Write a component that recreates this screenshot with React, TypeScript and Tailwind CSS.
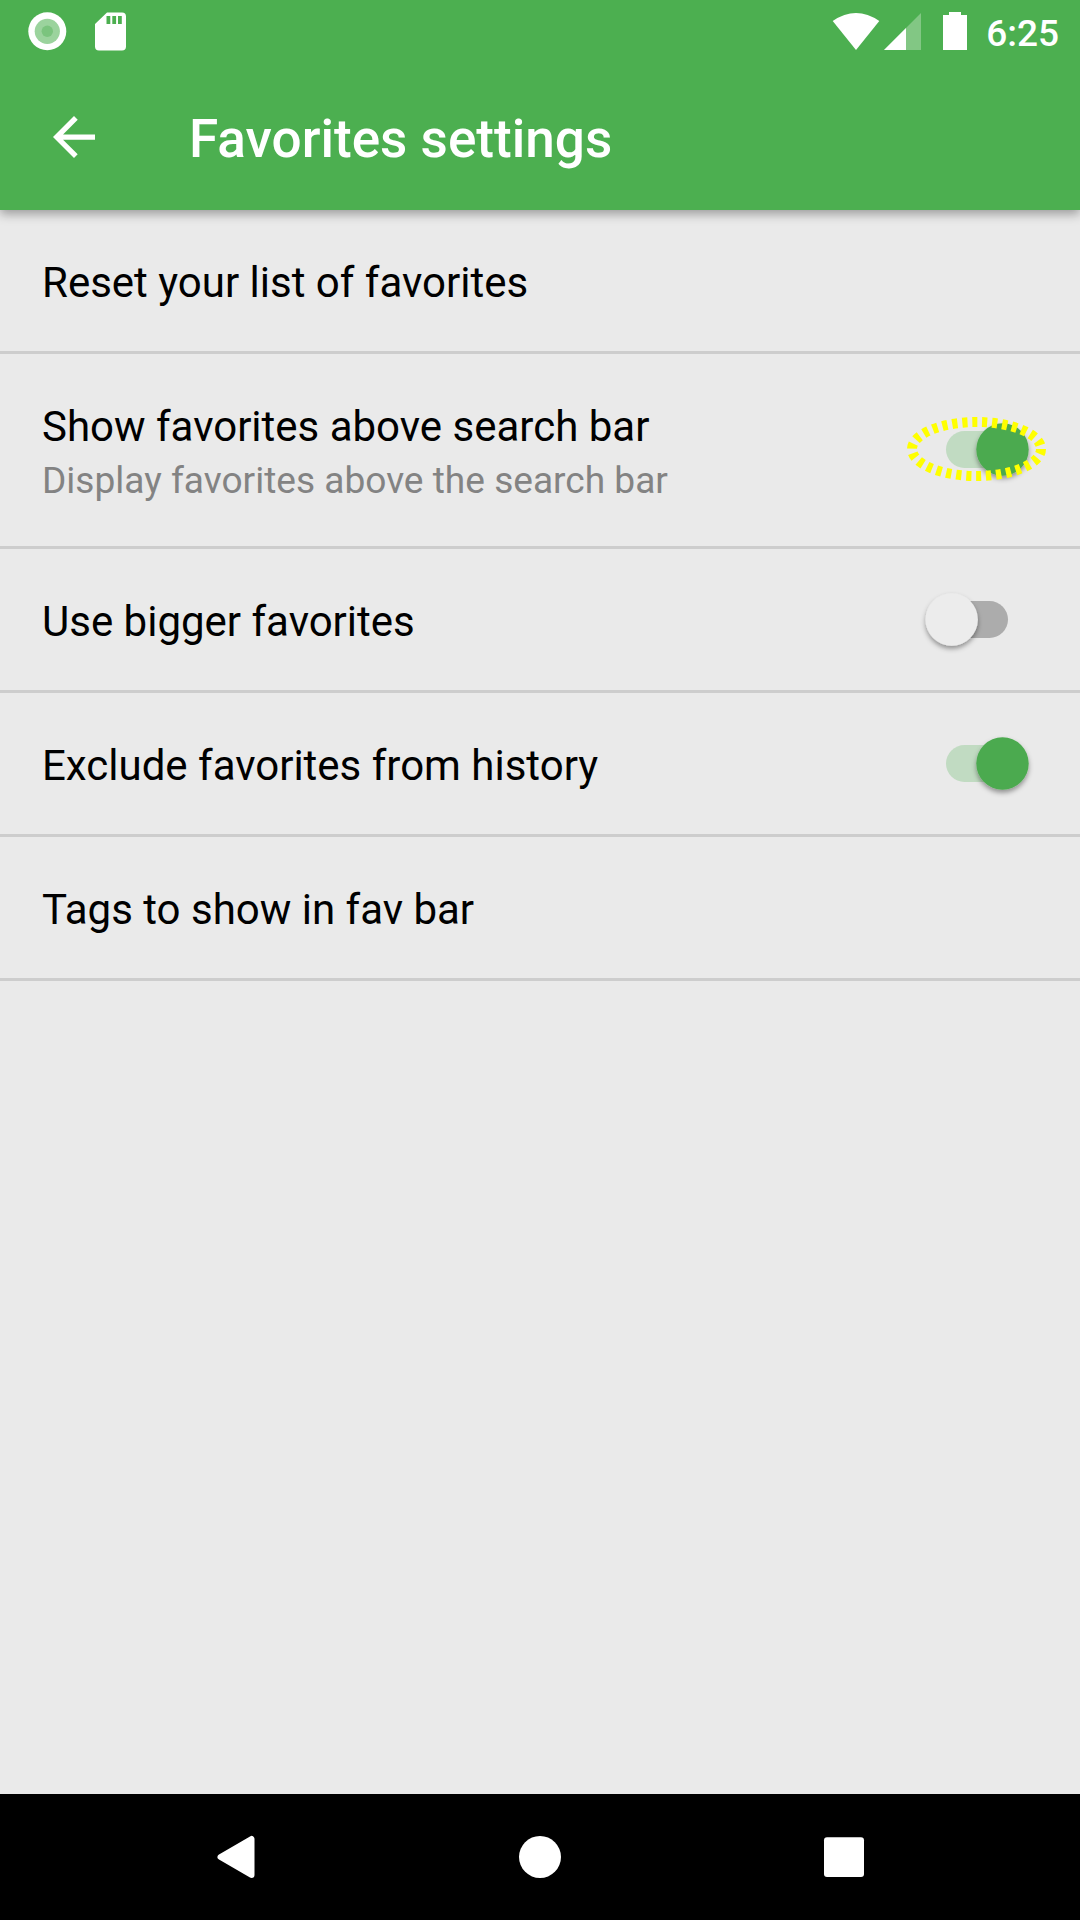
import React from "react";

function Toggle({ on, marked }: { on?: boolean; marked?: boolean }) {
  return (
    <svg className="h-[81px] w-[144px] shrink-0 overflow-visible" viewBox="0 0 144 81" fill="none">
      <defs>
        <filter id="knob-shadow" x="-30%" y="-30%" width="160%" height="170%">
          <feDropShadow dx="0" dy="3" stdDeviation="2.4" floodColor="#000" floodOpacity=".38" />
        </filter>
      </defs>
      {on ? (
        <rect x="42" y="22" width="72" height="37" rx="18.5" fill="#c1dbc2" />
      ) : (
        <rect x="32" y="22" width="72" height="37" rx="18.5" fill="#acacac" />
      )}
      <circle cx={on ? 98.5 : 47.7} cy="40.5" r="26.2" fill={on ? "#4caa4f" : "#ececec"} filter="url(#knob-shadow)" />
      {marked && <ellipse cx="72.5" cy="40" rx="64.5" ry="27" stroke="#ffff00" strokeWidth="10" strokeDasharray="5.2 4.8" />}
    </svg>
  );
}

function Row({ title, subtitle, children }: { title: string; subtitle?: string; children?: React.ReactNode }) {
  return (
    <div className={`flex items-center justify-between border-b-[3px] border-[#cdcdcd] pl-[42px] pr-[32px] ${subtitle ? "h-[195px] pb-px" : "h-[144px]"}`}>
      <div className={subtitle ? "pt-[12px]" : "pt-[5px]"}>
        <div className="text-[42px] leading-[50px] text-black">{title}</div>
        {subtitle && <div className="text-[37.1px] leading-[57px] text-[#838383]">{subtitle}</div>}
      </div>
      {children}
    </div>
  );
}

export default function App() {
  return (
    <div className="flex h-[1920px] w-[1080px] flex-col bg-[#eaeaea] font-['Roboto',sans-serif]">
      <header className="h-[210px] bg-[#4caf50] text-white shadow-[0_4px_10px_rgba(0,0,0,0.34)]">
        <div className="flex h-[64px] items-center justify-between pl-[28px] pr-[21px]">
          <svg className="h-[64px] w-[100px]" viewBox="28 0 100 64">
            <circle cx="47.3" cy="31.3" r="19" fill="white" />
            <circle cx="47.3" cy="31.3" r="12.6" fill="#9bd39d" />
            <circle cx="47.3" cy="31.3" r="5.7" fill="#7bc47e" />
            <path fillRule="evenodd" fill="white" d="M107 12.5H122q4 0 4 4V46.5q0 4-4 4H99q-4 0-4-4V24ZM106.5 16v8h3.8v-8ZM112.3 16v8h3.8v-8ZM118 16v8h3.8v-8Z" />
          </svg>
          <div className="flex items-center text-[37px] font-medium">
            <svg className="mr-[18px] h-[64px] w-[138px]" viewBox="830 0 138 64" fill="white">
              <path d="M832.7 21Q856 5 879.3 21L856 50Z" />
              <path d="M921 13V50H884Z" opacity=".3" />
              <path d="M906 28V50H884Z" />
              <path d="M949 12h12v3h6V50H943V15h6Z" />
            </svg>
            <span className="pt-[3px]">6:25</span>
          </div>
        </div>
        <div className="flex h-[146px] items-center pl-[53px]">
          <svg className="h-[42px] w-[42px]" viewBox="4 4 16 16" fill="white">
            <path d="M20 11H7.83l5.59-5.59L12 4l-8 8 8 8 1.41-1.41L7.83 13H20v-2z" />
          </svg>
          <h1 className="ml-[94px] pt-[6px] text-[53.1px] font-medium">Favorites settings</h1>
        </div>
      </header>
      <main className="flex-1">
        <Row title="Reset your list of favorites" />
        <Row title="Show favorites above search bar" subtitle="Display favorites above the search bar"><Toggle on marked /></Row>
        <Row title="Use bigger favorites"><Toggle /></Row>
        <Row title="Exclude favorites from history"><Toggle on /></Row>
        <Row title="Tags to show in fav bar" />
      </main>
      <nav className="flex h-[126px] items-center justify-center bg-black">
        <svg className="h-[44px] w-[650px]" viewBox="215 0 650 44" fill="white">
          <path d="M251.5 4V40L220.5 22Z" stroke="white" strokeWidth="6" strokeLinejoin="round" />
          <circle cx="540" cy="22" r="21" />
          <rect x="824" y="2.3" width="40" height="39.6" rx="3" />
        </svg>
      </nav>
    </div>
  );
}
